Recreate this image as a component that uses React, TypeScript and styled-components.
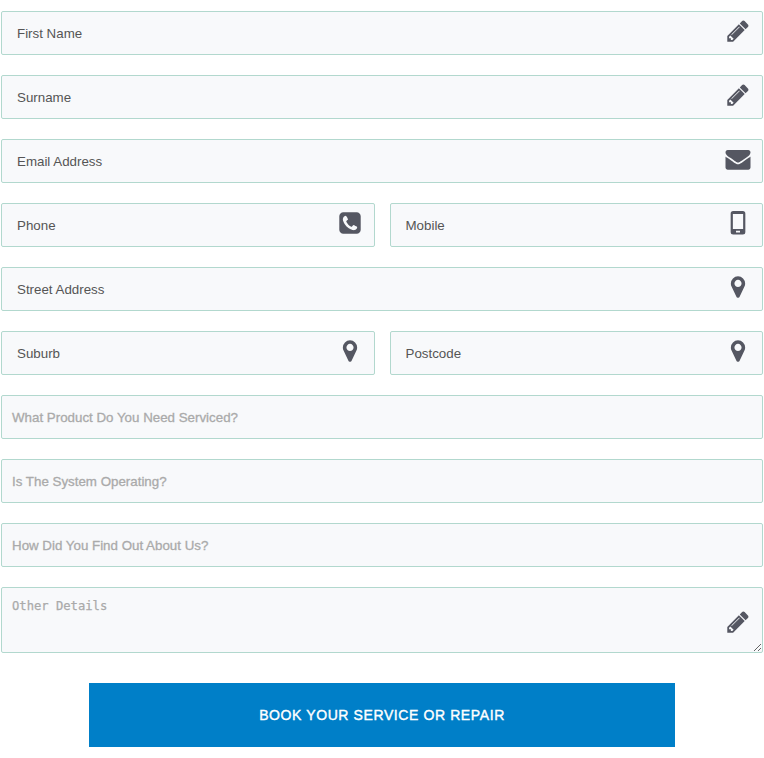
import React from "react";
import styled, { createGlobalStyle, css } from "styled-components";

const GlobalStyle = createGlobalStyle`
  * { box-sizing: border-box; }
  body { margin: 0; background: #fff; font-family: "Liberation Sans", Arial, sans-serif; }
`;

const Form = styled.form`
  display: flex;
  flex-direction: column;
  gap: 20px;
  padding: 11px 1px;
`;

const Row = styled.div`
  display: grid;
  grid-template-columns: 1fr 1fr;
  gap: 15px;
`;

const Field = styled.label`
  position: relative;
  display: block;
`;

const control = css`
  display: block;
  width: 100%;
  margin: 0;
  border: 1px solid #b2d8ce;
  border-radius: 2px;
  background: #f8f9fb;
  outline: none;
  font-size: 13.333px;
  line-height: 16px;
`;

const Input = styled.input`
  ${control}
  height: 44px;
  padding: 1px 50px 0 15px;
  font-family: "Liberation Sans", Arial, sans-serif;
  color: #555;
  &::placeholder { color: #555; opacity: 1; }
`;

const SelectBox = styled.div`
  ${control}
  height: 44px;
  padding: 14px 10px 0;
  color: #aaa;
  -webkit-text-stroke: 0.3px #aaa;
`;

const TextArea = styled.textarea`
  ${control}
  height: 66px;
  padding: 10px;
  resize: vertical;
  font-family: "DejaVu Sans Mono", monospace;
  font-size: 12.18px;
  &::placeholder { color: #aaa; opacity: 1; -webkit-text-stroke: 0.25px #aaa; }
`;

const Icon = styled.svg<{ $top?: number }>`
  position: absolute;
  top: ${(p) => p.$top ?? 7}px;
  right: 13px;
  width: 25px;
  height: 25px;
  overflow: visible;
  fill: #555762;
  pointer-events: none;
`;

const Submit = styled.button`
  width: 586px;
  height: 64px;
  margin: 10px 0 0 88px;
  padding: 0;
  border: 0;
  background: #007fc8;
  color: #fff;
  font-family: "Liberation Sans", Arial, sans-serif;
  font-size: 14px;
  letter-spacing: 0.6px;
  -webkit-text-stroke: 0.4px #fff;
`;

const icons = {
  pencil:
    "M491 1536l91-91-235-235-91 91v107h128v128h107zm523-928q0-22-22-22-10 0-17 7l-542 542q-7 7-7 17 0 22 22 22 10 0 17-7l542-542q7-7 7-17zm-54-192l416 416-832 832h-416v-416zm683 96q0 53-37 90l-166 166-416-416 166-165q36-38 90-38 53 0 91 38l235 234q37 39 37 91z",
  envelope:
    "M1792 710v794q0 66-47 113t-113 47h-1472q-66 0-113-47t-47-113v-794q44 49 101 87 362 246 497 345 57 42 92.5 65.5t94.5 48 110 24.5h2q51 0 110-24.5t94.5-48 92.5-65.5q170-123 498-345 57-39 100-87zm0-294q0 79-49 151t-122 123q-376 261-468 325-10 7-42.5 31t-54 38.5-52 32.5-57.5 27-50 9h-2q-23 0-50-9t-57.5-27-52-32.5-54-38.5-42.5-31q-91-64-262-182.5t-205-142.5q-62-42-117-115.5t-55-136.5q0-78 41.5-130t118.5-52h1472q65 0 112.5 47t47.5 113z",
  marker:
    "M1152 640q0-106-75-181t-181-75-181 75-75 181 75 181 181 75 181-75 75-181zm256 0q0 109-33 179l-364 774q-16 33-47.5 52t-67.5 19-67.5-19-46.5-52l-365-774q-33-70-33-179 0-212 150-362t362-150 362 150 150 362z",
  phone:
    "M1408 1193q0-11-2-16t-18-16.5-40.5-25-47.5-26.5-45.5-25-28.5-15q-5-3-19-13t-25-15-21-5q-15 0-36.5 20.5t-39.5 45-38.5 45-33.5 20.5q-7 0-16.5-3.5t-15.5-6.5-17-9.5-14-8.5q-99-55-170-126.5t-127-170.5q-2-3-8.5-14t-9.5-17-6.5-15.5-3.5-16.5q0-13 20.5-33.5t45-38.5 45-39.5 20.5-36.5q0-10-5-21t-15-25-13-19q-3-6-15-28.5t-25-45.5-26.5-47.5-25-40.5-16.5-18-16-2q-48 0-101 22-46 21-80 94.5t-34 130.5q0 16 2.5 34t5 30.5 9 33 10 29.5 12.5 33 11 30q60 164 216.5 320.5t320.5 216.5q6 2 30 11t33 12.5 29.5 10 33 9 30.5 5 34 2.5q57 0 130.5-34t94.5-80q22-53 22-101zm256-777v960q0 119-84.5 203.5t-203.5 84.5h-960q-119 0-203.5-84.5t-84.5-203.5v-960q0-119 84.5-203.5t203.5-84.5h960q119 0 203.5 84.5t84.5 203.5z",
  mobile:
    "M550 36h692q180 0 180 180v1332q0 180-180 180h-692q-180 0-180-180v-1332q0-180 180-180zm-22 215v1075h736v-1075zm224 1205v116h288v-116z",
};

type IconName = keyof typeof icons;

function Glyph({ name, top }: { name: IconName; top?: number }) {
  return (
    <Icon viewBox="-36 -36 1792 1792" $top={top} aria-hidden="true">
      <path fillRule={name === "mobile" ? "evenodd" : "nonzero"} d={icons[name]} />
    </Icon>
  );
}

function TextField({ label, icon }: { label: string; icon: IconName }) {
  return (
    <Field>
      <Input placeholder={label} aria-label={label} />
      <Glyph name={icon} />
    </Field>
  );
}

export default function App() {
  return (
    <>
      <GlobalStyle />
      <Form onSubmit={(e) => e.preventDefault()}>
        <TextField label="First Name" icon="pencil" />
        <TextField label="Surname" icon="pencil" />
        <TextField label="Email Address" icon="envelope" />
        <Row>
          <TextField label="Phone" icon="phone" />
          <TextField label="Mobile" icon="mobile" />
        </Row>
        <TextField label="Street Address" icon="marker" />
        <Row>
          <TextField label="Suburb" icon="marker" />
          <TextField label="Postcode" icon="marker" />
        </Row>
        <SelectBox>What Product Do You Need Serviced?</SelectBox>
        <SelectBox>Is The System Operating?</SelectBox>
        <SelectBox>How Did You Find Out About Us?</SelectBox>
        <Field>
          <TextArea placeholder="Other Details" aria-label="Other Details" />
          <Glyph name="pencil" top={22} />
        </Field>
        <Submit type="submit">BOOK YOUR SERVICE OR REPAIR</Submit>
      </Form>
    </>
  );
}
